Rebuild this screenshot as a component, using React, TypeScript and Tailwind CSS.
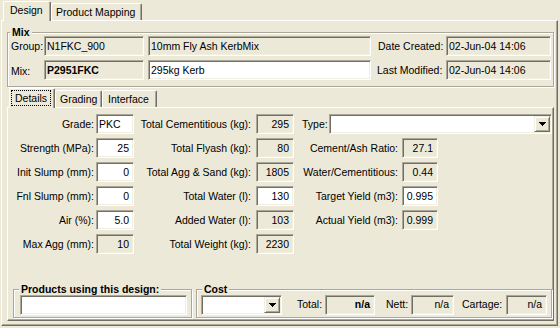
import clsx from 'clsx'
import type { ReactNode } from 'react'

const SUNKEN =
  'border border-t-[#aca899] border-l-[#aca899] border-r-white border-b-white shadow-[inset_1px_1px_0_#716f64,inset_-1px_-1px_0_#f1efe2]'
const RAISED =
  'border border-t-white border-l-white border-r-[#716f64] border-b-[#716f64] shadow-[inset_-1px_-1px_0_#aca899]'
const ETCHED = 'border border-[#aca899] shadow-[inset_1px_1px_0_#fff,1px_1px_0_#fff]'

function Field({
  className,
  white,
  right,
  bold,
  children,
}: {
  className?: string
  white?: boolean
  right?: boolean
  bold?: boolean
  children?: ReactNode
}) {
  return (
    <div
      className={clsx(
        'flex h-[20px] shrink-0 items-center overflow-hidden whitespace-nowrap',
        SUNKEN,
        white ? 'bg-white' : 'bg-[#ece9d8]',
        right ? 'justify-end pr-[4px]' : 'pl-[2px]',
        bold && 'font-bold',
        className
      )}
    >
      {children}
    </div>
  )
}

function Combo({ className }: { className?: string }) {
  return (
    <div className={clsx('flex h-[20px] shrink-0 justify-end bg-white p-[1px]', SUNKEN, className)}>
      <div className="flex w-[16px] items-center justify-center border border-t-[#f1efe2] border-l-[#f1efe2] border-r-[#716f64] border-b-[#716f64] bg-[#ece9d8] shadow-[inset_1px_1px_0_#fff,inset_-1px_-1px_0_#aca899]">
        <svg width="7" height="4" viewBox="0 0 7 4" shapeRendering="crispEdges">
          <path d="M0 0h7v1H0zM1 1h5v1H1zM2 2h3v1H2zM3 3h1v1H3z" fill="#000" />
        </svg>
      </div>
    </div>
  )
}

function Group({
  title,
  className,
  titleClass,
  children,
}: {
  title: string
  className?: string
  titleClass?: string
  children?: ReactNode
}) {
  return (
    <div className={clsx(ETCHED, 'shrink-0', className)}>
      <div className={clsx('-mt-[7px] h-[13px] w-fit bg-[#ece9d8] px-[2px] font-bold leading-[13px]', titleClass)}>
        {title}
      </div>
      {children}
    </div>
  )
}

function Tab({ label, active, className }: { label: ReactNode; active?: boolean; className?: string }) {
  return (
    <div
      className={clsx(
        'flex shrink-0 items-center rounded-t-[2px] border border-b-0 border-t-white border-l-white border-r-[#716f64] bg-[#ece9d8] shadow-[inset_-1px_0_0_#aca899]',
        active ? 'relative z-10 -mb-px h-[20px] pb-[2px]' : 'h-[17px]',
        className
      )}
    >
      {label}
    </div>
  )
}

function Label({ className, children }: { className?: string; children: ReactNode }) {
  return <div className={clsx('shrink-0 whitespace-nowrap', className)}>{children}</div>
}

const rows = [
  { l1: 'Grade:', v1: 'PKC', w1: true, left1: true, l2: 'Total Cementitious (kg):', v2: '295', w2: false },
  { l1: 'Strength (MPa):', v1: '25', w1: true, l2: 'Total Flyash (kg):', v2: '80', w2: false, l3: 'Cement/Ash Ratio:', v3: '27.1', w3: false },
  { l1: 'Init Slump (mm):', v1: '0', w1: true, l2: 'Total Agg & Sand (kg):', v2: '1805', w2: false, l3: 'Water/Cementitious:', v3: '0.44', w3: false },
  { l1: 'Fnl Slump (mm):', v1: '0', w1: true, l2: 'Total Water (l):', v2: '130', w2: true, l3: 'Target Yield (m3):', v3: '0.995', w3: true },
  { l1: 'Air (%):', v1: '5.0', w1: true, l2: 'Added Water (l):', v2: '103', w2: false, l3: 'Actual Yield (m3):', v3: '0.999', w3: false },
  { l1: 'Max Agg (mm):', v1: '10', w1: false, l2: 'Total Weight (kg):', v2: '2230', w2: false },
]

export default function App() {
  return (
    <div className="h-[328px] w-[560px] overflow-hidden bg-[#ece9d8] font-['Liberation_Sans',Arial,sans-serif] text-[10.5px] leading-[13px] text-black">
      {/* top tabs */}
      <div className="flex h-[20px] items-end pl-[3px]">
        <Tab active label="Design" className="w-[48px] pl-[6px]" />
        <Tab label="Product Mapping" className="w-[91px] pl-[4px]" />
      </div>

      <div className={clsx('ml-[1px] flex h-[306px] w-[557px] flex-col', RAISED)}>
        {/* Mix group */}
        <Group title="Mix" titleClass="ml-[2px]" className="ml-[5px] mt-[11px] h-[55px] w-[547px]">
          <div className="-mt-[5px] flex h-[24px] items-center pl-[3px]">
            <Label className="w-[33px]">Group:</Label>
            <Field className="w-[100px]">N1FKC_900</Field>
            <Field className="ml-[4px] w-[223px]">10mm Fly Ash KerbMix</Field>
            <Label className="ml-[7px] w-[68px]">Date Created:</Label>
            <Field className="w-[105px]">02-Jun-04 14:06</Field>
          </div>
          <div className="flex h-[24px] items-center pl-[3px]">
            <Label className="w-[33px] pt-[2px]">Mix:</Label>
            <Field bold className="w-[100px]">
              P2951FKC
            </Field>
            <Field white className="ml-[4px] w-[223px]">
              295kg Kerb
            </Field>
            <Label className="ml-[6px] w-[69px]">Last Modified:</Label>
            <Field className="w-[105px]">02-Jun-04 14:06</Field>
          </div>
        </Group>

        {/* details tabs */}
        <div className="ml-[7px] mt-[1px] flex h-[19px] items-end">
          <Tab
            active
            className="w-[46px] pl-[1px]"
            label={<span className="border border-dotted border-black px-[3px] leading-[14px]">Details</span>}
          />
          <Tab label="Grading" className="w-[47px] pl-[4px]" />
          <Tab label="Interface" className="w-[55px] pl-[5px]" />
        </div>

        <div className={clsx('ml-[5px] flex h-[214px] w-[547px] flex-col pt-[4px]', RAISED)}>
          {rows.map((r, i) => (
            <div key={i} className="flex h-[24px] items-center">
              <Label className="w-[88px] pr-[2px] text-right">{r.l1}</Label>
              <Field white={r.w1} right={!r.left1} className="w-[38px]">
                {r.v1}
              </Field>
              <Label className="w-[122px] pr-[5px] text-right">{r.l2}</Label>
              <Field white={r.w2} right className="w-[38px]">
                {r.v2}
              </Field>
              {i === 0 && (
                <>
                  <Label className="ml-[8px] w-[27px]">Type:</Label>
                  <Combo className="w-[223px]" />
                </>
              )}
              {r.l3 && (
                <>
                  <Label className="w-[108px] pr-[4px] text-right">{r.l3}</Label>
                  <Field white={r.w3} right className="w-[36px]">
                    {r.v3}
                  </Field>
                </>
              )}
            </div>
          ))}

          {/* bottom groups */}
          <div className="mt-[33px] flex">
            <Group title="Products using this design:" titleClass="ml-[5px]" className="ml-[5px] h-[29px] w-[179px]">
              <Field white className="-mt-[1px] ml-[6px] h-[18px] w-[167px]" />
            </Group>
            <Group title="Cost" titleClass="ml-[5px]" className="ml-[4px] h-[29px] w-[356px]">
              <div className="-mt-[1px] flex h-[19px] items-center">
                <Combo className="ml-[4px] h-[19px] w-[81px]" />
                <Label className="ml-[15px] w-[28px]">Total:</Label>
                <Field bold right className="h-[19px] w-[50px]">
                  n/a
                </Field>
                <Label className="ml-[11px] w-[25px]">Nett:</Label>
                <Field right className="h-[19px] w-[43px]">
                  n/a
                </Field>
                <Label className="ml-[8px] w-[44px]">Cartage:</Label>
                <Field right className="h-[19px] w-[41px]">
                  n/a
                </Field>
              </div>
            </Group>
          </div>
        </div>
      </div>
    </div>
  )
}
